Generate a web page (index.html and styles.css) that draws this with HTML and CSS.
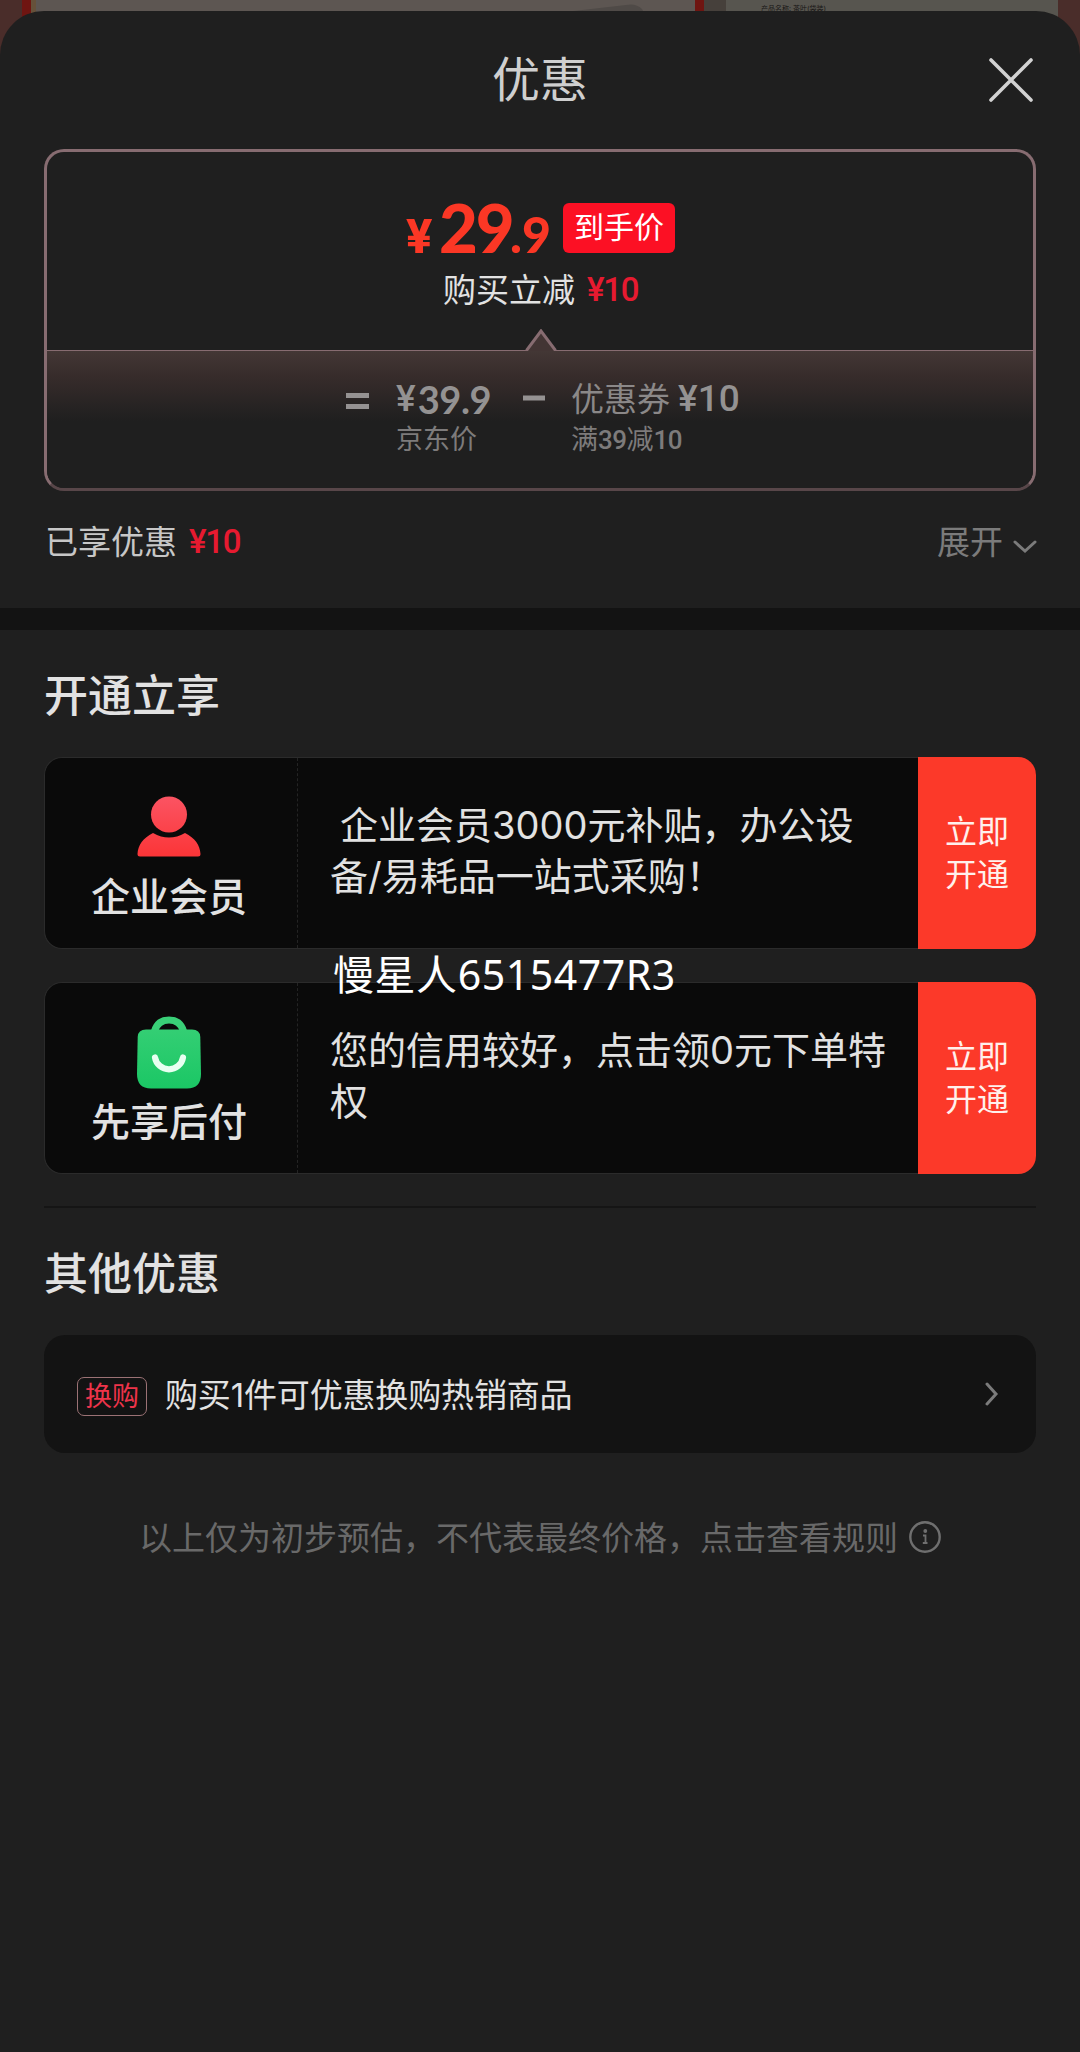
FILE: index.html
```html
<!DOCTYPE html>
<html lang="zh-CN">
<head>
<meta charset="utf-8">
<title>优惠</title>
<link rel="stylesheet" href="styles.css">
</head>
<body>
<div class="backdrop">
  <span class="bd-edge"></span><span class="bd-red"></span>
  <span class="bd-photo"><svg width="659" height="60" viewBox="0 0 659 60"><path d="M390 28 L590 5 Q600 3 606 9 L622 40 H390Z" fill="#4f4a47"/></svg></span>
  <span class="bd-red"></span><span class="bd-gap"></span>
  <span class="bd-page">产品名称: 茶叶(袋装)</span><span class="bd-edge"></span>
</div>
<main class="sheet">
  <header class="head">
    <h1 class="title">优惠</h1>
    <svg class="close" width="44" height="44" viewBox="0 0 44 44"><path d="M2 2 42 42M42 2 2 42" fill="none" stroke="#d2d2d2" stroke-width="3.6" stroke-linecap="round"/></svg>
  </header>

  <section class="deal">
    <div class="deal-top">
      <div class="price-row">
        <span class="price"><span class="yen">¥</span><span class="int">29</span><span class="dec">.9</span></span>
        <span class="badge">到手价</span>
      </div>
      <div class="cut">购买立减<b class="red">¥10</b></div>
    </div>
    <div class="deal-bottom">
      <svg class="arrow" width="32" height="22" viewBox="0 0 32 22"><path d="M2 22 16 2 30 22Z" fill="#433534"/><path d="M1.500 21.500 16 2 30.500 21.500" fill="none" stroke="#876c71" stroke-width="3"/></svg>
      <svg class="eq" width="24" height="16" viewBox="0 0 24 16"><path d="M0 2.500H23M0 13.500H23" stroke="#959292" stroke-width="5"/></svg>
      <div class="term base"><span class="sum"><b class="num">¥</b><b class="num lato">39.9</b></span><span class="note">京东价</span></div>
      <svg class="minus" width="22" height="6" viewBox="0 0 22 6"><path d="M0 3H22" stroke="#959292" stroke-width="5"/></svg>
      <div class="term"><span class="sum">优惠券<b class="num coupon">¥10</b></span><span class="note">满<b>39</b>减<b>10</b></span></div>
    </div>
  </section>

  <div class="enjoyed">
    <span>已享优惠<b class="red">¥10</b></span>
    <span class="expand">展开<svg width="24" height="14" viewBox="0 0 24 14"><path d="M2 2 12 11 22 2" fill="none" stroke="#7b7b7b" stroke-width="3" stroke-linecap="round"/></svg></span>
  </div>

  <div class="band"></div>

  <section class="open">
    <h2 class="h2">开通立享</h2>
    <article class="offer">
      <div class="who">
        <svg width="64" height="62" viewBox="0 0 64 62">
          <defs><linearGradient id="gr" gradientUnits="userSpaceOnUse" x1="0" y1="0" x2="0" y2="62"><stop offset="0" stop-color="#fb5463"/><stop offset="1" stop-color="#fb3436"/></linearGradient></defs>
          <circle cx="32" cy="18.500" r="18" fill="url(#gr)"/>
          <path d="M16 37Q32 46 48 37C58 42 63 49 63.500 58Q63.500 60.500 61 60.500H3Q.5 60.500 .5 58C1 49 6 42 16 37Z" fill="url(#gr)"/>
        </svg>
        <span class="label">企业会员</span>
      </div>
      <p class="desc indent">企业会员3000元补贴，办公设<br>备/易耗品一站式采购！</p>
      <a class="go">立即<br>开通</a>
    </article>
    <article class="offer second">
      <span class="mark">慢星人6515477R3</span>
      <div class="who bag">
        <svg width="66" height="74" viewBox="0 0 66 74">
          <defs><linearGradient id="gg" gradientUnits="userSpaceOnUse" x1="0" y1="0" x2="0" y2="72"><stop offset="0" stop-color="#39d077"/><stop offset="1" stop-color="#1bc765"/></linearGradient></defs>
          <path d="M18.500 15C21 7 26 4 33 4S45 7 47.500 15" fill="none" stroke="#39d077" stroke-width="7"/>
          <path d="M10 13.500H56Q64 13.500 64.300 21L65 58Q65 72.500 51 72.500H15Q1 72.500 1 58L1.700 21Q2 13.500 10 13.500Z" fill="url(#gg)"/>
          <path d="M19 41.500A14.200 14.200 0 0 0 47 41.500" fill="none" stroke="#e8fff1" stroke-width="6.200" stroke-linecap="round"/>
        </svg>
        <span class="label">先享后付</span>
      </div>
      <p class="desc">您的信用较好，点击领0元下单特权</p>
      <a class="go">立即<br>开通</a>
    </article>
  </section>

  <section class="other">
    <h2 class="h2">其他优惠</h2>
    <div class="swap">
      <span class="tag">换购</span>
      <span class="swap-text">购买1件可优惠换购热销商品</span>
      <svg width="14" height="24" viewBox="0 0 14 24"><path d="M2 2 11 12 2 22" fill="none" stroke="#7b7b7b" stroke-width="3" stroke-linecap="round"/></svg>
    </div>
  </section>

  <footer class="foot">以上仅为初步预估，不代表最终价格，点击查看规则<svg width="32" height="32" viewBox="0 0 32 32"><g fill="none" stroke="#6f6f6f"><circle cx="16" cy="16" r="14.700" stroke-width="2.400"/><path d="M14 14.500H16.500V22M13.800 22H18.500" stroke-width="1.800"/></g><circle cx="16.300" cy="10" r="1.900" fill="#6f6f6f"/></svg></footer>
</main>
</body>
</html>
```
FILE: styles.css
```css
* { box-sizing: border-box; margin: 0; padding: 0; }
body {
  width: 1080px; height: 2052px; overflow: hidden; position: relative;
  background: #1f1f1f; color: #e2e2e2;
  font-family: Inter, "Noto Sans CJK SC", sans-serif; font-size: 33px;
}
svg { display: block; flex: none; }
b { font-weight: 500; }
.backdrop { position: absolute; top: 0; left: 0; width: 1080px; height: 60px; display: flex; }
.bd-edge { width: 22px; background: #4a2d2a; }
.bd-red { width: 9px; background: #6f1511; }
.bd-photo { width: 664px; background: #5d5652; border-left: 5px solid #66513a; }
.bd-gap { width: 22px; background: #46403b; }
.bd-page { width: 332px; background: #57554f; padding: 5px 0 0 35px; font-size: 7px; line-height: 8px; color: #171615; white-space: nowrap; }

.sheet { position: relative; margin-top: 11px; height: 2041px; padding-top: 1px; background: #1f1f1f; border-radius: 44px 44px 0 0; }
.head { height: 137px; display: grid; grid-template-columns: 1fr auto 1fr; align-items: center; padding: 0 47px 0 91px; }
.title { grid-column: 2; font-size: 48px; font-weight: 400; line-height: 60px; color: #cfcfcf; transform: translate(-22px, 0); margin-bottom: 1px; }
.close { justify-self: end; margin-bottom: 2px; }

.deal { margin: 0 44px; height: 342px; border: 3px solid #876c71; border-bottom-color: #584649; border-radius: 20px; display: flex; flex-direction: column; overflow: hidden; }
.deal-top { height: 198px; padding-top: 51px; }
.price-row { display: flex; height: 50px; padding-left: 359px; }
.price { width: 157px; display: flex; align-items: baseline; color: #fb3725; font-family: Lato, sans-serif; font-weight: 900; line-height: 48px; white-space: nowrap; }
.yen { font-family: Roboto, sans-serif; font-weight: 800; font-size: 49px; width: 33px; }
.int { font-size: 67px; letter-spacing: -2px; width: 71px; }
.dec { font-size: 50px; }
.badge { width: 112px; height: 50px; border-radius: 6px; background: #fc1024; color: #fff; font-size: 30px; line-height: 49px; text-align: center; }
.cut { padding-left: 396px; line-height: 40px; margin-top: 17px; display: flex; }
.red { color: #e71a30; font-family: Roboto, sans-serif; font-size: 33px; font-weight: 500; letter-spacing: -1.3px; margin-left: 12px; }
.deal-bottom { position: relative; flex: 1; display: flex; border-top: 1px solid #876c71; background: linear-gradient(#433735, #372c2b 25px, #1f1f1f 70px); padding: 28px 0 0 299px; color: #8b8888; }
.arrow { position: absolute; left: 478px; top: -22px; }
.eq { margin: 14px 26px 0 0; }
.minus { margin: 16px 26px 0 0; }
.base { width: 127px; }
.term { display: flex; flex-direction: column; white-space: nowrap; }
.sum { height: 40px; line-height: 40px; display: flex; }
.num { font-size: 37px; font-family: Roboto, sans-serif; color: #949292; }
.lato { font-family: Lato, sans-serif; font-weight: 700; font-size: 38px; letter-spacing: -.4px; margin-left: 2px; }
.coupon { margin-left: 8px; }
.note { font-size: 27px; line-height: 40px; margin-top: 1px; color: #7d7b7b; }
.note b { font-size: 26px; font-family: Roboto, sans-serif; letter-spacing: -.5px; }

.enjoyed { height: 117px; padding: 31px 44px 0 45px; display: flex; justify-content: space-between; line-height: 40px; color: #c7c7c7; }
.enjoyed > span { display: flex; }
.expand { color: #7b7b7b; }
.expand svg { margin: 18px -1px 0 10px; }
.band { height: 22px; background: #131313; }

.open { margin: 0 44px; height: 578px; border-bottom: 2px solid #151515; padding-top: 34px; }
.h2 { font-size: 44px; font-weight: 500; line-height: 64px; color: #e2e2e2; }
.offer { position: relative; display: flex; height: 192px; margin-top: 29px; border-radius: 18px; background: #0a0a0a; border: 1px solid #2b2b2b; border-right: 0; }
.second { margin-top: 33px; }
.who { width: 253px; flex: none; border-right: 1px dashed #242424; display: flex; flex-direction: column; align-items: center; padding: 38px 4px 0 0; }
.bag { padding-top: 33px; }
.label { font-size: 39px; font-weight: 500; line-height: 50px; margin-top: 14px; }
.bag .label { margin-top: 7px; }
.desc { flex: 1; padding: 42px 0 0 32px; font-size: 38px; line-height: 51px; }
.indent { text-indent: 10px; }
.go { width: 118px; flex: none; margin: -1px 0; padding-top: 53px; border-radius: 0 18px 18px 0; background: #fc3929; color: #fff0ec; font-size: 32px; line-height: 43px; text-align: center; }
.mark { position: absolute; left: 288px; top: -39px; font-family: "Noto Sans", "Noto Sans CJK SC", sans-serif; font-size: 41px; letter-spacing: .55px; line-height: 60px; color: #fff; white-space: nowrap; }

.other { margin: 0 44px; padding-top: 34px; }
.swap { margin-top: 29px; height: 118px; border-radius: 21px; background: #131313; display: flex; align-items: center; padding: 0 37px 0 33px; }
.tag { width: 70px; height: 39px; margin-top: 5px; border: 1px solid #9b7275; border-radius: 7px; color: #ed344a; font-size: 27px; line-height: 37px; text-align: center; }
.swap-text { flex: 1; margin: 0 0 3px 18px; letter-spacing: -.15px; }
.foot { display: flex; justify-content: center; margin-top: 65px; line-height: 40px; color: #696969; }
.foot svg { margin: 3px 0 0 11px; }
```
